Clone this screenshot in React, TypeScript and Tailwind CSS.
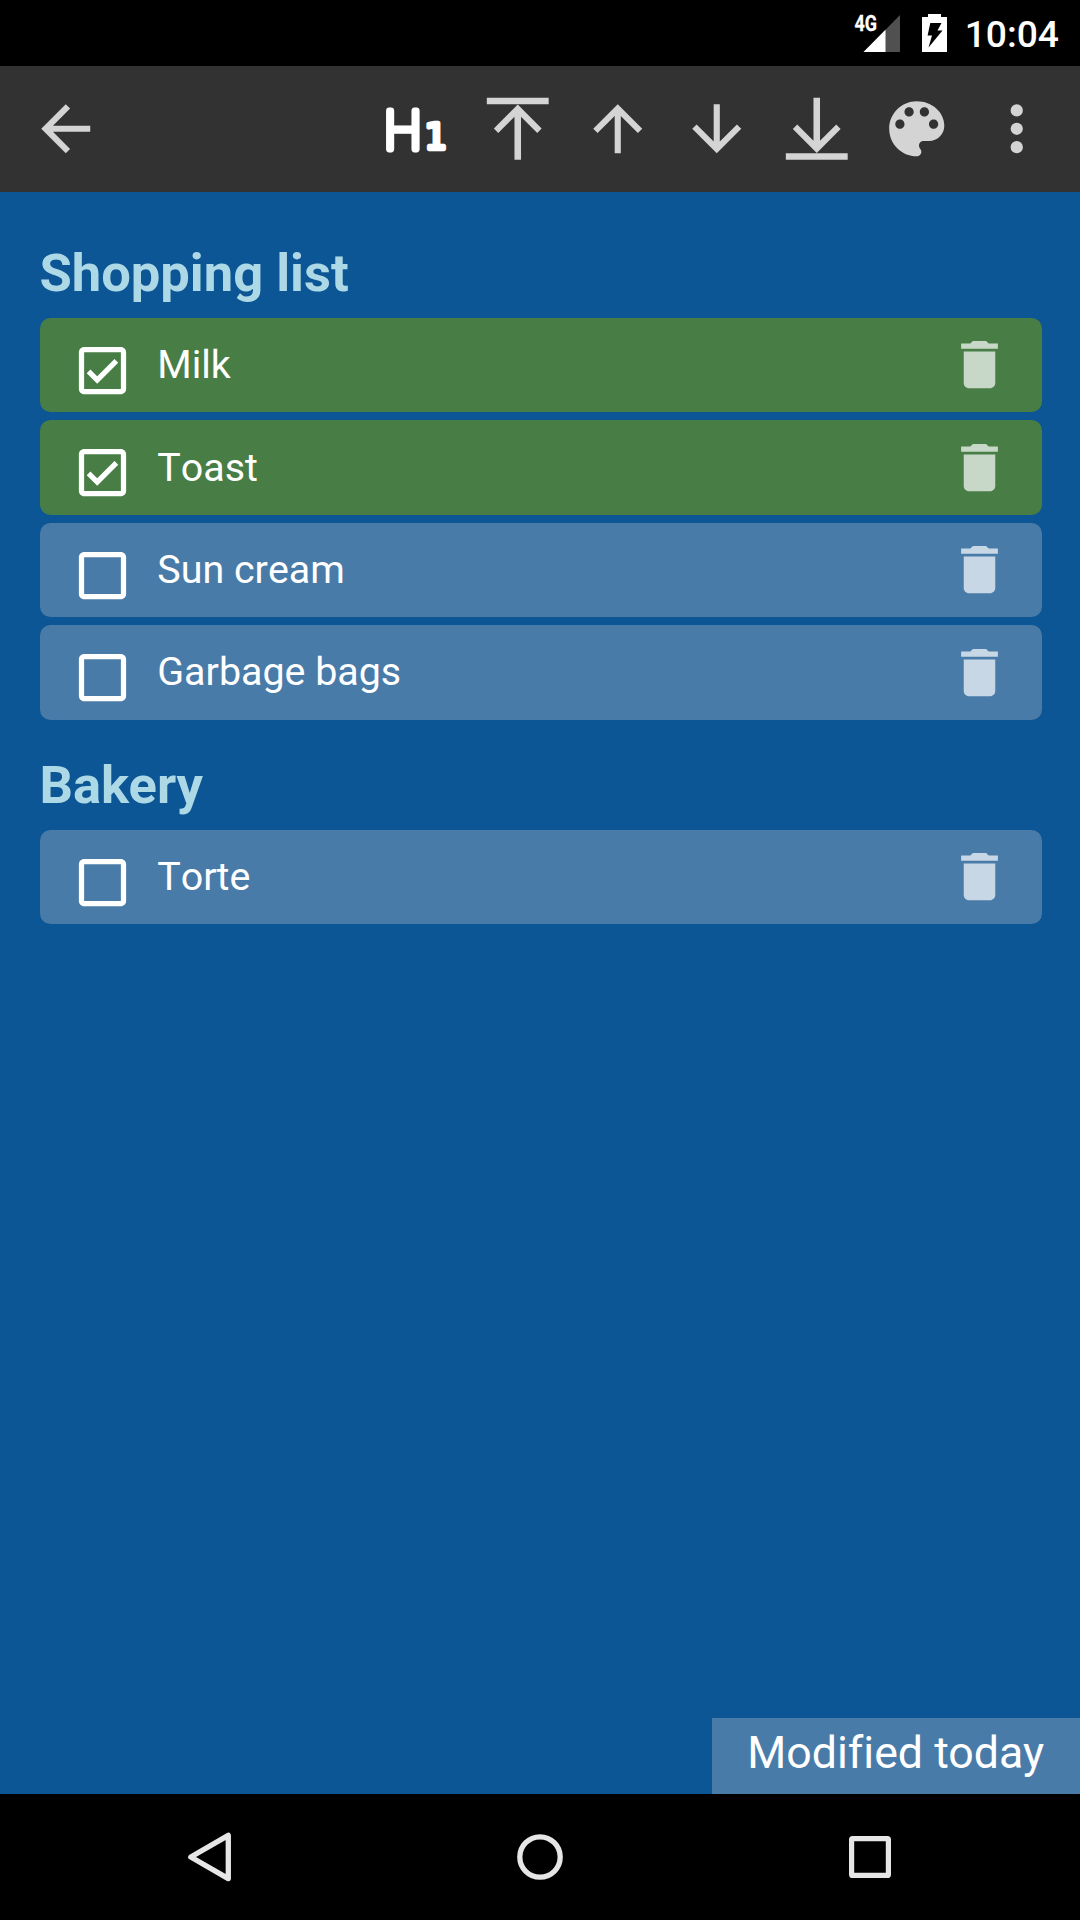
import type { ReactNode } from "react";

function ToolIcon({ children }: { children: ReactNode }) {
  return (
    <svg viewBox="0 0 24 24" fill="currentColor" className="h-[73.5px] w-[73.5px] shrink-0 overflow-visible text-[#d4d4d4]">
      {children}
    </svg>
  );
}

function StatusBar() {
  return (
    <div className="flex h-[66px] items-start justify-end bg-black pr-[21px] text-white">
      <svg viewBox="0 0 48 66" className="h-[66px] w-12">
        <path d="M10.5 52 47 15v37z" fill="#505050" />
        <path d="M10.5 52 32.5 29.7V52z" fill="#fff" />
        <text
          x="1.5"
          y="31.2"
          fill="#fff"
          stroke="#fff"
          strokeWidth="0.3"
          fontFamily="Roboto"
          fontWeight="700"
          fontSize="21.5"
          textLength="22.5"
          lengthAdjust="spacingAndGlyphs"
        >
          4G
        </text>
      </svg>
      <svg viewBox="0 0 26 66" className="ml-5 h-[66px] w-[26px]">
        <path d="M7 14h13v3h6v35H1V17h6z" fill="#fff" />
        <path d="M9.3 23h11.2l-4 7.5h5L7.5 47.5l3.5-12H6.6z" fill="#000" />
      </svg>
      <div className="ml-[18px] pt-[10.5px] font-['Roboto',sans-serif] text-[37.2px] leading-[46px] font-medium">
        10:04
      </div>
    </div>
  );
}

function Toolbar() {
  return (
    <div className="flex h-[126px] items-center justify-between bg-[#323232] pr-[27px] pl-[29px]">
      <ToolIcon>
        <path d="M20 11H7.83l5.59-5.59L12 4l-8 8 8 8 1.41-1.41L7.83 13H20v-2z" />
      </ToolIcon>
      <div className="flex items-center gap-[26.25px]">
        <svg viewBox="0 0 74 74" className="h-[74px] w-[74px] shrink-0 overflow-visible" fill="#fff" stroke="#fff" strokeLinejoin="round">
          <g transform="translate(3.2 56.6) scale(0.98 1)">
            <text x="0" y="0" fontFamily="Roboto" fontWeight="100" fontSize="54" strokeWidth="6.8">
              H
            </text>
          </g>
          <text x="43.8" y="57" fontFamily="DejaVu Sans" fontSize="35" strokeWidth="4.4">
            1
          </text>
        </svg>
        <ToolIcon>
          <path d="M1.9 1.9h20.2V4H1.9z" />
          <path d="M13.07 22.1h-2.14V8.05l-5.3 5.3-1.43-1.45L12 4.05l7.8 7.85-1.43 1.45-5.3-5.3z" />
        </ToolIcon>
        <ToolIcon>
          <path d="M4 12l1.41 1.41L11 7.83V20h2V7.83l5.58 5.59L20 12l-8-8-8 8z" />
        </ToolIcon>
        <ToolIcon>
          <path d="M20 12l-1.41-1.41L13 16.17V4h-2v12.17l-5.58-5.59L4 12l8 8 8-8z" />
        </ToolIcon>
        <ToolIcon>
          <path d="M1.9 20h20.2v2.1H1.9z" />
          <path d="M10.93 1.9h2.14v14.05l5.3-5.3 1.43 1.45L12 19.95 4.2 12.1l1.43-1.45 5.3 5.3z" />
        </ToolIcon>
        <ToolIcon>
          <path d="M12 3c-4.97 0-9 4.03-9 9s4.03 9 9 9c.83 0 1.5-.67 1.5-1.5 0-.39-.15-.74-.39-1.01-.23-.26-.38-.61-.38-.99 0-.83.67-1.5 1.5-1.5H16c2.76 0 5-2.24 5-5 0-4.42-4.03-8-9-8zm-5.5 9c-.83 0-1.5-.67-1.5-1.5S5.67 9 6.5 9 8 9.67 8 10.5 7.33 12 6.5 12zm3-4C8.67 8 8 7.33 8 6.5S8.67 5 9.5 5s1.5.67 1.5 1.5S10.33 8 9.5 8zm5 0c-.83 0-1.5-.67-1.5-1.5S13.67 5 14.5 5s1.5.67 1.5 1.5S15.33 8 14.5 8zm3 4c-.83 0-1.5-.67-1.5-1.5S16.67 9 17.5 9s1.5.67 1.5 1.5-.67 1.5-1.5 1.5z" />
        </ToolIcon>
        <ToolIcon>
          <circle cx="12" cy="6" r="2" />
          <circle cx="12" cy="12" r="2" />
          <circle cx="12" cy="18" r="2" />
        </ToolIcon>
      </div>
    </div>
  );
}

function Item({ label, done = false }: { label: string; done?: boolean }) {
  return (
    <div
      className={
        "flex h-[94.5px] items-start rounded-[10.5px] pr-[31.4px] pl-[30.9px] " +
        (done ? "bg-[#487e46]" : "bg-[#497ba9]")
      }
    >
      <svg viewBox="0 0 24 24" fill="#fff" className="mt-[21px] h-[63px] w-[63px] shrink-0">
        {done && <path d="M17.99 9l-1.41-1.42-6.59 6.59-2.58-2.57-1.42 1.41 4 3.99z" />}
        <path d="M19 3H5c-1.1 0-2 .9-2 2v14c0 1.1.9 2 2 2h14c1.1 0 2-.9 2-2V5c0-1.1-.9-2-2-2zm0 16H5V5h14v14z" />
      </svg>
      <div className="ml-[23.4px] flex-1 pt-[24.3px] text-[39.4px] leading-[46px] text-white [font-kerning:none]">{label}</div>
      <svg viewBox="0 0 24 24" fill="#fff" fillOpacity="0.7" className="mt-[15.5px] h-[63px] w-[63px] shrink-0">
        <path d="M6 19c0 1.1.9 2 2 2h8c1.1 0 2-.9 2-2V7H6v12zM19 4h-3.5l-1-1h-5l-1 1H5v2h14V4z" />
      </svg>
    </div>
  );
}

function Heading({ children }: { children: ReactNode }) {
  return <h2 className="-ml-[0.6px] flex h-[102.4px] items-start pt-[26.2px] text-[52.5px] leading-[62px] font-bold text-[#add8e6]">{children}</h2>;
}

function NavBar() {
  return (
    <div className="flex h-[126px] items-center justify-between bg-black pr-[180px] pl-[180px]">
      <svg viewBox="0 0 60 60" className="h-[60px] w-[60px]" fill="none" stroke="#e6e6e6" strokeWidth="5.3" strokeLinejoin="round">
        <path d="M10.8 30 48.3 8.4v43.2z" />
      </svg>
      <svg viewBox="0 0 60 60" className="h-[60px] w-[60px]" fill="none" stroke="#e6e6e6" strokeWidth="5.3">
        <circle cx="30" cy="30" r="20.2" />
      </svg>
      <svg viewBox="0 0 60 60" className="h-[60px] w-[60px]" fill="none" stroke="#e6e6e6" strokeWidth="5.2" strokeLinejoin="round">
        <rect x="11.6" y="11.6" width="36.8" height="36.8" rx="1" />
      </svg>
    </div>
  );
}

export default function App() {
  return (
    <div className="flex h-[1920px] w-[1080px] flex-col overflow-hidden font-['Roboto',sans-serif]">
      <StatusBar />
      <Toolbar />
      <main className="flex flex-1 flex-col justify-between bg-[#0c5695]">
        <div className="flex flex-col pt-[23.6px] pr-[37.8px] pl-[40px]">
          <Heading>Shopping list</Heading>
          <div className="flex flex-col gap-[7.875px]">
            <Item label="Milk" done />
            <Item label="Toast" done />
            <Item label="Sun cream" />
            <Item label="Garbage bags" />
          </div>
          <div className="pt-[7.875px]">
            <Heading>Bakery</Heading>
            <Item label="Torte" />
          </div>
        </div>
        <div className="flex h-[76px] w-[368px] items-start self-end bg-[#497ba9] pt-2 pl-[35.2px] text-[44.7px] leading-[54px] whitespace-nowrap text-white [font-variant-ligatures:none]">
          Modified today
        </div>
      </main>
      <NavBar />
    </div>
  );
}
